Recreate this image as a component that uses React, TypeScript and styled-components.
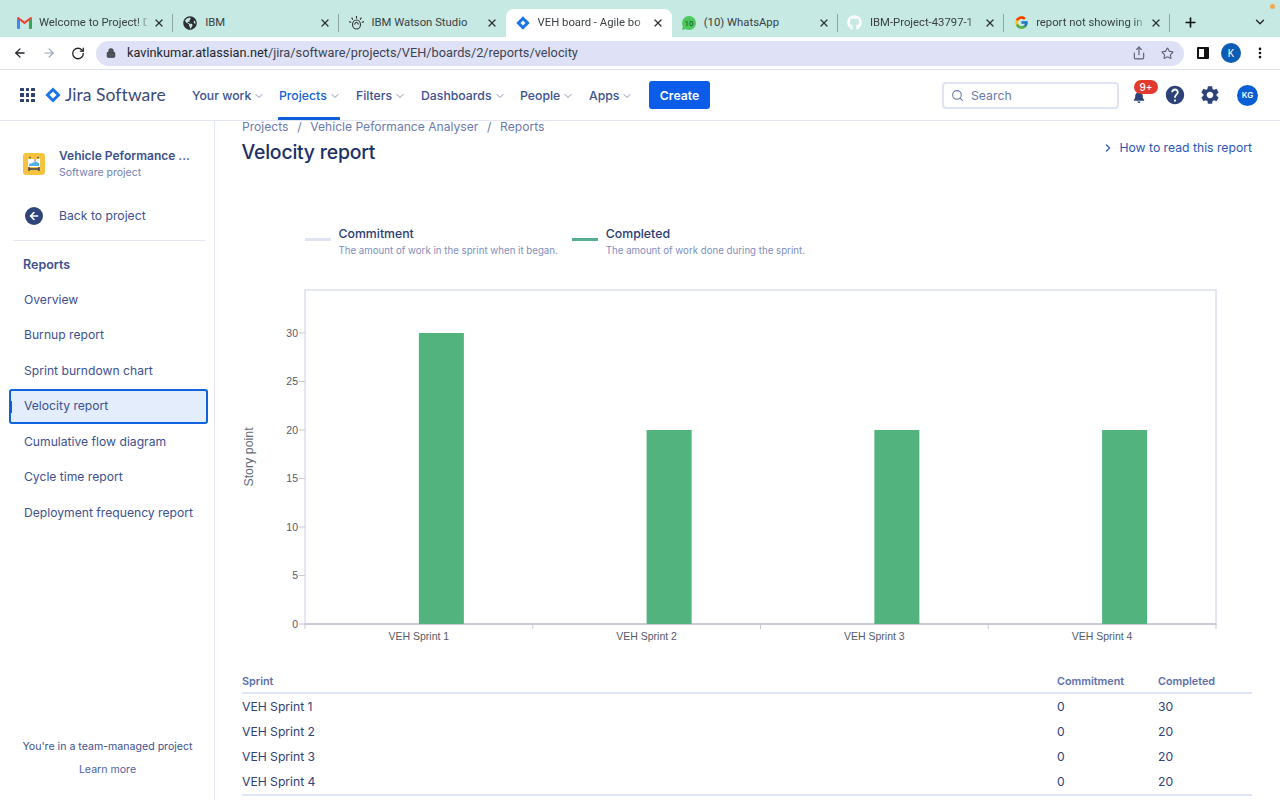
import React from "react";
import styled, { createGlobalStyle } from "styled-components";
import { ArrowLeft, ArrowRight, RotateCw, Lock, Share, Star, X, Plus, ChevronDown, ChevronRight, Search, MoreVertical } from "lucide-react";
import { FaGithub, FaGlobeAmericas, FaBell, FaArrowLeft } from "react-icons/fa";
import { FcGoogle } from "react-icons/fc";
import { MdHelp, MdSettings } from "react-icons/md";

const Global = createGlobalStyle`
  html, body { margin: 0; padding: 0; background: #fff; }
  body { font-family: Inter, "Liberation Sans", sans-serif; }
  * { box-sizing: border-box; }
`;

const Page = styled.div`
  width: 1280px; height: 800px; overflow: hidden; display: flex; flex-direction: column; background: #fff;
`;
const TabStrip = styled.div`
  height: 37px; flex: none; background: #c6e9e3; display: flex; align-items: flex-end; padding-left: 7px; position: relative;
`;
const Tab = styled.div<{ $active?: boolean; $sep?: boolean }>`
  width: 166.2px; height: 28px; flex: none; display: flex; align-items: center; padding: 0 8px 1px 9px;
  background: ${p => (p.$active ? "#fff" : "transparent")};
  border-radius: 8px 8px 0 0; position: relative; color: #3b4043;
  font: 400 11.3px/16px Roboto, sans-serif;
  ${p => p.$sep ? `&::after { content: ""; position: absolute; right: 0; top: 5px; height: 18px; width: 1px; background: #8fa6a2; }` : ""}
`;
const Fav = styled.span`
  width: 16px; height: 16px; flex: none; display: flex; align-items: center; justify-content: center; margin-right: 7px;
`;
const TabLabel = styled.span<{ $fade?: boolean }>`
  flex: 1; min-width: 0; white-space: nowrap; overflow: hidden;
  ${p => p.$fade ? `mask-image: linear-gradient(90deg, #000 90%, rgba(0,0,0,.25) 100%);` : ""}
`;
const TabClose = styled(X)`
  flex: none; width: 12px; height: 12px; color: #2e3234; stroke-width: 2.6; margin-left: 6px;
`;
const NewTab = styled(Plus)`
  width: 15px; height: 15px; color: #111; stroke-width: 2.6; margin: 0 0 7px 13px;
`;
const TabMenu = styled(ChevronDown)`
  position: absolute; left: 1253px; top: 15px; width: 14px; height: 14px; color: #222; stroke-width: 2.2;
`;
const OrangeDot = styled.span`
  position: absolute; left: 1270px; top: 4px; width: 5px; height: 5px; border-radius: 50%; background: #eea84e;
`;
const Toolbar = styled.div`
  height: 33px; flex: none; display: flex; align-items: center; padding: 0 8px 0 13px; background: #fff; border-bottom: 1px solid #dcdfe8;
`;
const ToolBtn = styled.span<{ $dim?: boolean }>`
  width: 14px; height: 16px; display: flex; align-items: center; justify-content: center; margin-right: 15px;
  color: ${p => (p.$dim ? "#9a9fc2" : "#1f2227")};
`;
const Address = styled.div`
  width: 1088px; height: 25px; margin-left: -4px; border-radius: 13px; background: #dfe2f6; display: flex; align-items: center;
  padding: 0 9px 0 10px; color: #3d4252; font: 400 12.75px/16px Roboto, sans-serif;
`;
const Host = styled.span`color: #22252c;`;
const Url = styled.span`flex: 1; margin-left: 11px; white-space: nowrap;`;
const AddrIcons = styled.span`display: flex; gap: 15px; align-items: center; color: #5a5f73; margin-right: 1px;`;
const ToolRight = styled.div`
  display: flex; align-items: center; margin-left: 13px; gap: 12px; color: #111;
`;
const SidePanelIcon = styled.span`
  width: 12px; height: 12px; border: 2px solid #111; border-right-width: 5px; border-radius: 1px;
`;
const ChromeAvatar = styled.span`
  width: 20px; height: 20px; border-radius: 50%; background: #0b5cb5; color: #fff; display: flex; align-items: center; justify-content: center;
  font: 400 10px Roboto, sans-serif;
`;
const Nav = styled.nav`
  height: 51px; flex: none; display: flex; align-items: center; padding: 0 21px 0 20px; background: #fff; border-bottom: 1px solid #e2e5f3; position: relative; z-index: 2;
`;
const AppGrid = styled.span`
  width: 15px; height: 15px; display: grid; grid-template-columns: repeat(3, 3.6px); grid-auto-rows: 3.6px; gap: 2px; margin-right: 10px;
  i { background: #2d4170; display: block; border-radius: .5px; }
`;
const LogoName = styled.span`
  font: 400 17.5px/24px Lato, sans-serif; color: #3a4a78; margin-left: 4px; width: 127px; flex: none; letter-spacing: .05px;
`;
const NavItem = styled.div<{ $active?: boolean; $w: number }>`
  width: ${p => p.$w}px; flex: none; height: 50px; padding-top: 1px; display: flex; align-items: center; position: relative; white-space: nowrap;
  font: 500 12.25px/16px Inter, sans-serif; color: ${p => (p.$active ? "#1561d8" : "#3d5190")};
  svg { margin-left: 2px; width: 12px; height: 12px; color: #8792b8; stroke-width: 2; }
  ${p => p.$active ? `&::after { content: ""; position: absolute; left: -1px; width: 62px; bottom: 0; height: 3px; background: #0f5fd8; border-radius: 1px 1px 0 0; }` : ""}
`;
const CreateBtn = styled.div`
  width: 61px; height: 28px; border-radius: 3px; background: #0b5ce8; color: #fff; display: flex; align-items: center; justify-content: center; padding-top: 1px;
  font: 600 12.25px/16px Inter, sans-serif;
`;
const SearchBox = styled.div`
  width: 177px; height: 27px; margin-left: 232px; padding: 1px 0 0 7px; border: 2px solid #dfe3f3; border-radius: 4px; display: flex; align-items: center; gap: 7px;
  color: #6a79ab; font: 400 12.25px/16px Inter, sans-serif;
  svg { width: 13px; height: 13px; color: #6a79ab; }
`;
const NavIcons = styled.div`
  display: flex; align-items: center; margin-left: 12px; color: #2c4279;
`;
const BellWrap = styled.span`
  width: 16px; height: 16px; position: relative; display: flex; align-items: center; justify-content: center; margin-right: 17px; padding-top: 3px;
`;
const Badge = styled.span`
  position: absolute; left: 3px; top: -7px; width: 24px; height: 14px; border-radius: 7px; background: #e23a2e; color: #fff;
  font: 500 10px/14px Inter, sans-serif; text-align: center;
`;
const Avatar = styled.span`
  width: 21px; height: 21px; margin-left: 16px; border-radius: 50%; background: #0b5fd6; color: #fff; display: flex; align-items: center; justify-content: center;
  font: 600 8px Inter, sans-serif;
`;
const Body = styled.div`flex: 1; min-height: 0; display: flex;`;
const Sidebar = styled.aside`
  width: 215px; flex: none; border-right: 1px solid #e5e8f4; display: flex; flex-direction: column; padding: 25px 6px 24px 9px;
`;
const ProjectHead = styled.div`display: flex; align-items: center; padding-left: 14px; gap: 14px; height: 36px;`;
const ProjectIcon = styled.span`
  width: 22px; height: 22px; border-radius: 3px; background: #f7c33e; flex: none; display: flex; align-items: center; justify-content: center;
`;
const ProjectText = styled.div`display: flex; flex-direction: column; gap: 3px;`;
const ProjectName = styled.div`font: 600 12px/14px Inter, sans-serif; color: #3d5190; white-space: nowrap;`;
const ProjectSub = styled.div`font: 400 10.5px/13px Inter, sans-serif; color: #6f80b5;`;
const BackRow = styled.div`
  display: flex; align-items: center; gap: 16px; margin-top: 24px; padding-left: 16px; height: 20px; font: 400 12.2px/16px Inter, sans-serif; color: #3d5190;
`;
const BackIcon = styled.span`
  width: 18px; height: 18px; border-radius: 50%; background: #2f4479; color: #fff; display: flex; align-items: center; justify-content: center; flex: none;
  svg { width: 10px; height: 10px; }
`;
const SideRule = styled.div`height: 1px; background: #e3e6f3; margin: 14px 0 0 4px; width: 193px;`;
const SideHeading = styled.div`font: 600 12.5px/16px Inter, sans-serif; color: #3d5190; margin: 16px 0 9px 14px;`;
const SideItem = styled.div<{ $active?: boolean }>`
  height: 35.5px; display: flex; align-items: center; padding-left: 15px; width: 199px; font: 400 12.15px/16px Inter, sans-serif; color: #3d5190; border-radius: 3px; position: relative;
  ${p => p.$active ? `background: #e3edfc; box-shadow: inset 0 0 0 2px #0f63dd; &::before { content: ""; position: absolute; left: 0; top: 12px; height: 12px; width: 3px; background: #0f5fd8; }` : ""}
`;
const SideFoot = styled.div`
  margin-top: auto; text-align: center; width: 197px; display: flex; flex-direction: column; gap: 11px; font: 400 10.6px/12px Inter, sans-serif; color: #3d5190;
`;
const FootLink = styled.span`color: #4f63a4;`;
const Main = styled.main`flex: 1; min-width: 0; padding: 0 28px 0 27px; display: flex; flex-direction: column;`;
const Crumbs = styled.div`
  height: 12px; display: flex; gap: 8.75px; font: 400 12.1px/12px Inter, sans-serif; color: #6b7bb0;
`;
const TitleRow = styled.div`display: flex; align-items: center; justify-content: space-between; height: 28px; margin-top: 5px;`;
const Title = styled.h1`margin: 0 0 0 -.5px; font: 500 19.4px/28px Inter, sans-serif; color: #1c2f66; letter-spacing: -.2px;`;
const HowTo = styled.div`
  display: flex; align-items: center; gap: 5px; font: 400 12.2px/16px Inter, sans-serif; color: #2756b8; margin-top: -8px;
  svg { width: 12px; height: 12px; stroke-width: 2.4; }
`;
const Legend = styled.div`display: flex; margin: 58px 0 0 63px; gap: 14.5px;`;
const LegendItem = styled.div`display: flex; gap: 7.5px;`;
const Swatch = styled.span<{ $c: string }>`
  width: 26px; height: 3px; background: ${p => p.$c}; margin-top: 14px; flex: none;
`;
const LegendText = styled.div`display: flex; flex-direction: column; gap: 1px; padding-top: 1px;`;
const LegendTitle = styled.div`font: 500 12.3px/18px Inter, sans-serif; color: #2a3c72;`;
const LegendDesc = styled.div`font: 400 9.7px/14px Inter, sans-serif; color: #7f8ec0; white-space: nowrap;`;
const ChartSvg = styled.svg`display: block; margin-top: 22px; flex: none; text { font-family: Arial, "Liberation Sans", sans-serif; }`;
const Table = styled.div`display: flex; flex-direction: column; margin-top: 23px; border-bottom: 2px solid #dfe5f8;`;
const Row = styled.div<{ $head?: boolean }>`
  display: grid; grid-template-columns: 815px 101px 1fr; align-items: center;
  height: ${p => (p.$head ? "21px" : "25px")};
  ${p => p.$head ? `border-bottom: 2px solid #dfe5f8; font: 600 10.8px/14px Inter, sans-serif; color: #5d70ad; padding-bottom: 1px;` : `font: 400 12.15px/16px Inter, sans-serif; color: #2f4279;`}
`;

const sprints = [["VEH Sprint 1", 0, 30], ["VEH Sprint 2", 0, 20], ["VEH Sprint 3", 0, 20], ["VEH Sprint 4", 0, 20]] as const;
const reports = ["Overview", "Burnup report", "Sprint burndown chart", "Velocity report", "Cumulative flow diagram", "Cycle time report", "Deployment frequency report"];

const Gmail = () => (
  <svg width="15" height="12" viewBox="0 0 15 12">
    <path d="M0 1.5 L3 3v9H1a1 1 0 0 1-1-1z" fill="#4285f4" />
    <path d="M12 3l3-1.5V11a1 1 0 0 1-1 1h-2z" fill="#34a853" />
    <path d="M0 1.5C0 .3 1.2-.3 2 .4L7.5 4.6 13 .4c.8-.7 2-.1 2 1.1L12 3.8 7.5 7.2 3 3.8z" fill="#ea4335" />
  </svg>
);
const Watson = () => (
  <svg width="16" height="16" viewBox="0 0 16 16" fill="none" stroke="#333" strokeWidth="1.1">
    <ellipse cx="8.5" cy="9.5" rx="4" ry="4.5" />
    <path d="M6.5 9.5c1-3 3-3 4 0M8.5 1v2.4M3.6 2.6l1.3 2M13.4 2.6l-1.3 2M1 6.6l2.2.8M16 6.6l-2.2.8" />
  </svg>
);
const Diamond = ({ s = 14, hole = 4 }: { s?: number; hole?: number }) => (
  <svg width={s} height={s} viewBox="0 0 16 16">
    <path d="M8 .4 15.6 8 8 15.6.4 8z" fill="#1a73e8" />
    <rect x={8 - hole / 2} y={8 - hole / 2} width={hole} height={hole} transform="rotate(45 8 8)" fill="#fff" />
  </svg>
);
const WhatsApp = () => (
  <svg width="16" height="16" viewBox="0 0 16 16">
    <circle cx="8" cy="8" r="7" fill="#4cc85f" />
    <path d="M2 11 1 15l4-1z" fill="#4cc85f" />
    <text x="8" y="11" textAnchor="middle" fontSize="8" fontFamily="Roboto" fill="#13501f">10</text>
  </svg>
);
const ProjectArt = () => (
  <svg width="16" height="16" viewBox="0 0 16 16">
    <rect x="2" y="3" width="12" height="8" fill="#fff" />
    <path d="M3 9c2-3 3-1 5-3s3 1 5 1v3H3z" fill="#4fb3e8" />
    <path d="M3 11v4M13 11v4M3 13h10" stroke="#3a3f58" strokeWidth="1.4" />
    <circle cx="4" cy="1.6" r=".8" fill="#3a3f58" /><circle cx="12" cy="1.6" r=".8" fill="#3a3f58" /><circle cx="9" cy="4" r=".9" fill="#e8704a" />
  </svg>
);

const tabs: { fav: React.ReactNode; label: string; active?: boolean; sep?: boolean; fade?: boolean }[] = [
  { fav: <Gmail />, label: "Welcome to Project! D", sep: true, fade: true },
  { fav: <FaGlobeAmericas size={14} color="#2c2f33" />, label: "IBM", sep: true },
  { fav: <Watson />, label: "IBM Watson Studio" },
  { fav: <Diamond />, label: "VEH board - Agile bo", active: true, fade: true },
  { fav: <WhatsApp />, label: "(10) WhatsApp", sep: true },
  { fav: <FaGithub size={15} color="#fff" />, label: "IBM-Project-43797-1", sep: true, fade: true },
  { fav: <FcGoogle size={15} />, label: "report not showing in", sep: true, fade: true },
];
const navItems = [["Your work", 87], ["Projects", 77], ["Filters", 65], ["Dashboards", 99], ["People", 69], ["Apps", 60]] as const;

const Chart = () => {
  const x0 = 63, x1 = 974, top = 10, base = 344;
  const y = (v: number) => base - v * 9.7;
  const step = (x1 - x0) / 4;
  return (
    <ChartSvg width="1010" height="370" viewBox="0 0 1010 370">
      <rect x={x0} y={top} width={x1 - x0} height={base - top} fill="none" stroke="#dcdfee" strokeWidth="1.5" />
      <line x1={x0} x2={x1} y1={base} y2={base} stroke="#bfc2cc" strokeWidth="1.5" />
      {[0, 5, 10, 15, 20, 25, 30].map(v => (
        <g key={v}>
          <line x1={x0 - 6} x2={x0} y1={y(v)} y2={y(v)} stroke="#c6c9d2" />
          <text x={x0 - 7} y={y(v) + 3.5} textAnchor="end" fontSize="10.5" fill="#555a68">{v}</text>
        </g>
      ))}
      {[0, 1, 2, 3, 4].map(i => (
        <line key={i} x1={x0 + i * step} x2={x0 + i * step} y1={base} y2={base + 5} stroke="#c6c9d2" />
      ))}
      {sprints.map((s, i) => (
        <g key={s[0]}>
          <rect x={x0 + i * step + step / 2} width="45" y={y(s[2])} height={base - y(s[2])} fill="#53b37e" />
          <text x={x0 + i * step + step / 2} y={base + 16} textAnchor="middle" fontSize="10.5" fill="#555a68">{s[0]}</text>
        </g>
      ))}
      <text transform="translate(11 177) rotate(-90)" textAnchor="middle" fontSize="12.4" fill="#666b78">Story point</text>
    </ChartSvg>
  );
};

export default function App() {
  return (
    <Page>
      <Global />
      <TabStrip>
        {tabs.map(t => (
          <Tab key={t.label} $active={t.active} $sep={t.sep}>
            <Fav>{t.fav}</Fav>
            <TabLabel $fade={t.fade}>{t.label}</TabLabel>
            <TabClose />
          </Tab>
        ))}
        <NewTab />
        <TabMenu />
        <OrangeDot />
      </TabStrip>
      <Toolbar>
        <ToolBtn><ArrowLeft size={18} strokeWidth={2.2} /></ToolBtn>
        <ToolBtn $dim><ArrowRight size={18} strokeWidth={2} /></ToolBtn>
        <ToolBtn><RotateCw size={15} strokeWidth={2.2} /></ToolBtn>
        <Address>
          <Lock size={10} strokeWidth={2.5} fill="#555" />
          <Url><Host>kavinkumar.atlassian.net</Host>/jira/software/projects/VEH/boards/2/reports/velocity</Url>
          <AddrIcons><Share size={14} /><Star size={13} /></AddrIcons>
        </Address>
        <ToolRight>
          <SidePanelIcon />
          <ChromeAvatar>K</ChromeAvatar>
          <MoreVertical size={14} strokeWidth={2.6} />
        </ToolRight>
      </Toolbar>
      <Nav>
        <AppGrid>{Array.from({ length: 9 }, (_, i) => <i key={i} />)}</AppGrid>
        <Diamond s={16} hole={5} />
        <LogoName>Jira Software</LogoName>
        {navItems.map(([n, w]) => (
          <NavItem key={n} $w={w} $active={n === "Projects"}>{n}<ChevronDown /></NavItem>
        ))}
        <CreateBtn>Create</CreateBtn>
        <SearchBox><Search />Search</SearchBox>
        <NavIcons>
          <BellWrap><FaBell size={12} /><Badge>9+</Badge></BellWrap>
          <MdHelp size={22} />
          <MdSettings size={22} style={{ marginLeft: 13 }} />
          <Avatar>KG</Avatar>
        </NavIcons>
      </Nav>
      <Body>
        <Sidebar>
          <ProjectHead>
            <ProjectIcon><ProjectArt /></ProjectIcon>
            <ProjectText>
              <ProjectName>Vehicle Peformance ...</ProjectName>
              <ProjectSub>Software project</ProjectSub>
            </ProjectText>
          </ProjectHead>
          <BackRow><BackIcon><FaArrowLeft /></BackIcon>Back to project</BackRow>
          <SideRule />
          <SideHeading>Reports</SideHeading>
          {reports.map(r => <SideItem key={r} $active={r === "Velocity report"}>{r}</SideItem>)}
          <SideFoot>
            <div>You're in a team-managed project</div>
            <FootLink>Learn more</FootLink>
          </SideFoot>
        </Sidebar>
        <Main>
          <Crumbs><span>Projects</span><span>/</span><span>Vehicle Peformance Analyser</span><span>/</span><span>Reports</span></Crumbs>
          <TitleRow>
            <Title>Velocity report</Title>
            <HowTo><ChevronRight />How to read this report</HowTo>
          </TitleRow>
          <Legend>
            <LegendItem>
              <Swatch $c="#e0e2f5" />
              <LegendText><LegendTitle>Commitment</LegendTitle><LegendDesc>The amount of work in the sprint when it began.</LegendDesc></LegendText>
            </LegendItem>
            <LegendItem>
              <Swatch $c="#57ae90" />
              <LegendText><LegendTitle>Completed</LegendTitle><LegendDesc>The amount of work done during the sprint.</LegendDesc></LegendText>
            </LegendItem>
          </Legend>
          <Chart />
          <Table>
            <Row $head><span>Sprint</span><span>Commitment</span><span>Completed</span></Row>
            {sprints.map(s => <Row key={s[0]}><span>{s[0]}</span><span>{s[1]}</span><span>{s[2]}</span></Row>)}
          </Table>
        </Main>
      </Body>
    </Page>
  );
}
